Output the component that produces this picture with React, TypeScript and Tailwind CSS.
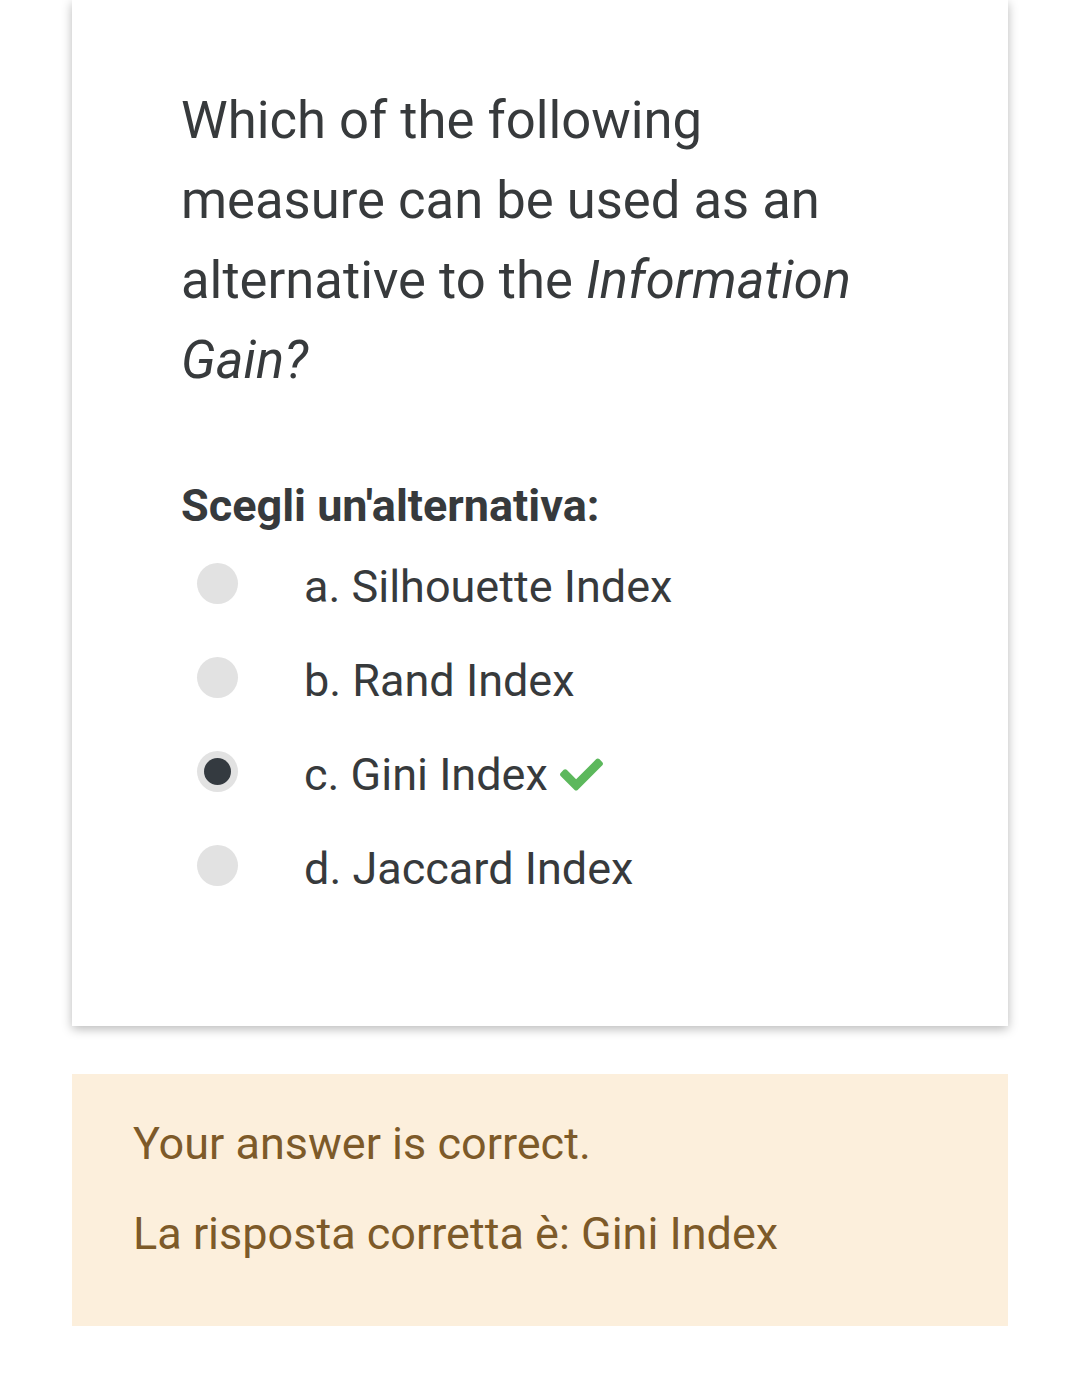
import React from 'react';
import { FaCheck } from 'react-icons/fa';

interface Choice {
  label: string;
  selected?: boolean;
  correct?: boolean;
}

const choices: Choice[] = [
  { label: 'a. Silhouette Index' },
  { label: 'b. Rand Index' },
  { label: 'c. Gini Index', selected: true, correct: true },
  { label: 'd. Jaccard Index' },
];

const Radio: React.FC<{ checked?: boolean }> = ({ checked }) => (
  <span className="flex h-[41px] w-[41px] shrink-0 items-center justify-center rounded-full bg-[#e2e2e2]">
    {checked && <span className="h-[27px] w-[27px] rounded-full bg-[#343a40]" />}
  </span>
);

const App: React.FC = () => {
  return (
    <div
      className="min-h-[1383px] w-full bg-white px-[72px] text-[#373a3c]"
      style={{ fontFamily: 'Roboto, "Noto Sans", sans-serif' }}
    >
      {/* Question card */}
      <div className="bg-white pt-[80px] pb-[114px] pl-[109px] pr-[120px] shadow-[0_3px_10px_rgba(0,0,0,0.28)]">
        <p className="text-[52.6px] leading-[80px]">
          Which of the following measure can be used as an alternative to the{' '}
          <em>Information Gain?</em>
        </p>

        <div className="mt-[81px] text-[45px] font-bold leading-[50px]">Scegli un'alternativa:</div>

        <div className="mt-[5px]">
          {choices.map((c) => (
            <div key={c.label} className="flex h-[94px] items-center pl-[16px]">
              <Radio checked={c.selected} />
              <div className="ml-[66px] mt-[7px] flex items-center">
                <span className="whitespace-nowrap text-[45px] leading-none">{c.label}</span>
                {c.correct && <FaCheck className="ml-[12px] text-[#5cb85c]" size={43} />}
              </div>
            </div>
          ))}
        </div>
      </div>

      {/* Feedback */}
      <div className="mt-[48px] bg-[#fcefdc] pt-[43px] pb-[65px] pl-[61px] text-[45px] leading-[54px] text-[#7d5a29]">
        <p>Your answer is correct.</p>
        <p className="mt-[36px]">La risposta corretta è: Gini Index</p>
      </div>
    </div>
  );
};

export default App;
